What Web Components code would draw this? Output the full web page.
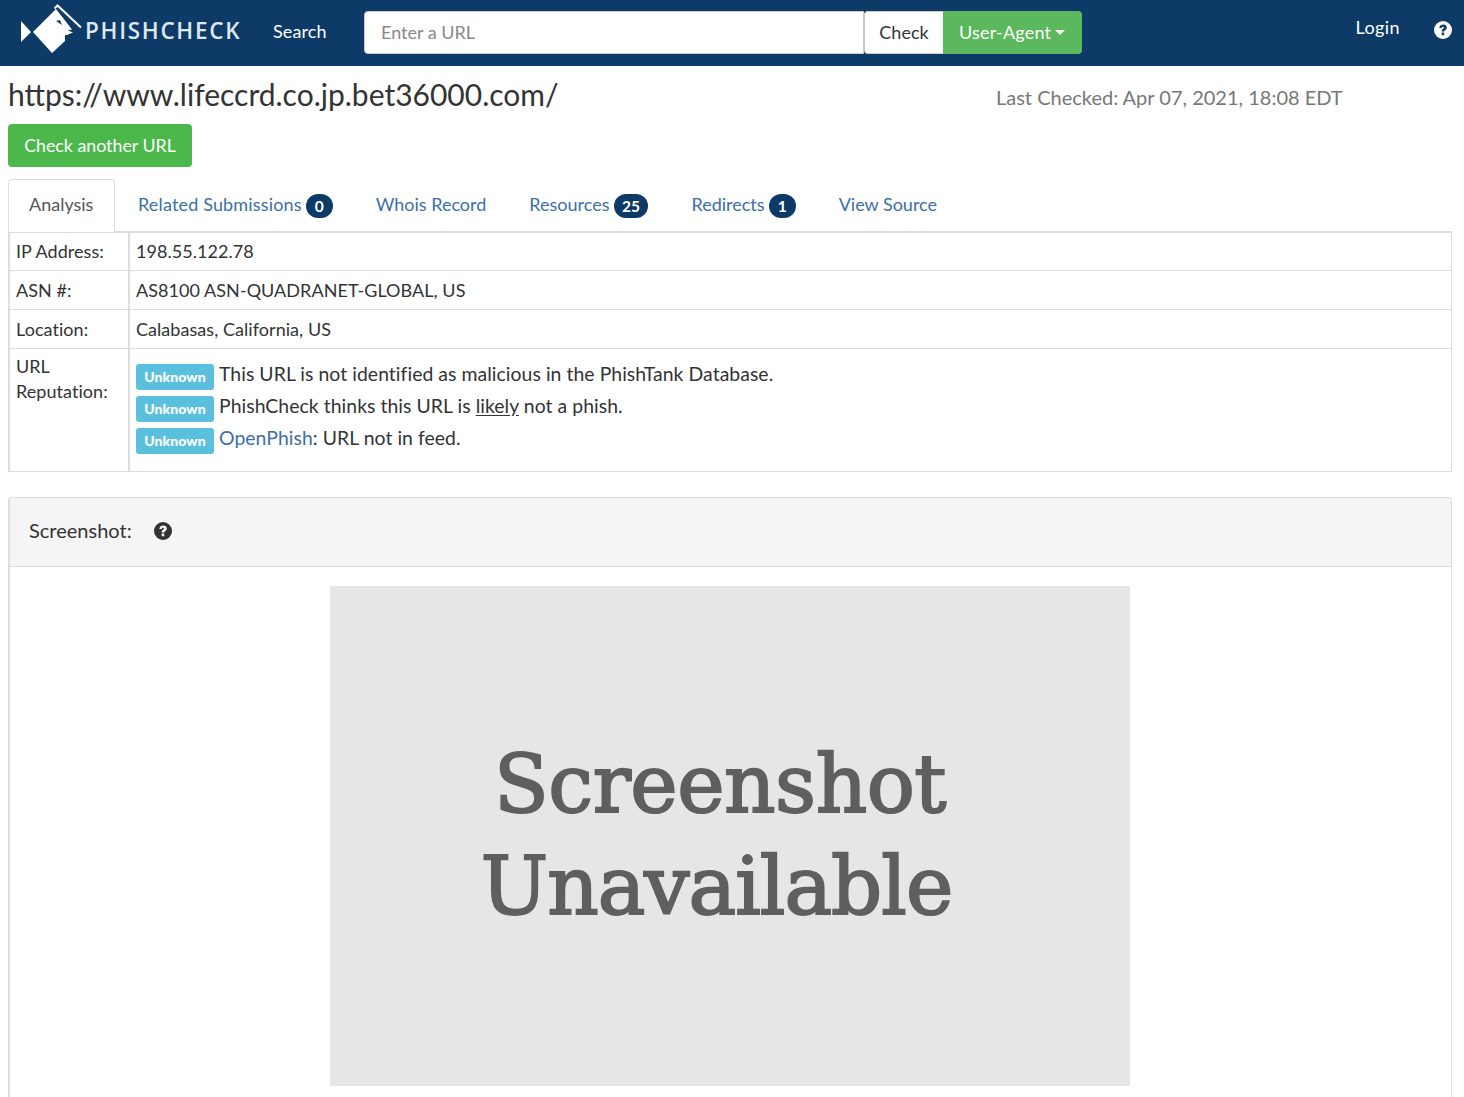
<!DOCTYPE html>
<html><head><meta charset="utf-8"><style>
html,body{margin:0;padding:0;background:#fff;color:#333;font:18px/25.7px "Lato",sans-serif}
</style></head><body>
<pc-nav></pc-nav>
<pc-main></pc-main>
<script>
const FONT='font-family:Lato,sans-serif;';
const help=(c,q)=>`<svg width="18" height="18" viewBox="0 0 18 18" style="display:block"><circle cx="9" cy="9" r="9" fill="${c}"/><path d="M5.300 6.900C5.600 4.700 7.200 3.500 9.200 3.500c2.100 0 3.600 1.300 3.600 3 0 1.400-.8 2.100-1.700 2.700-.7.400-.9.700-.9 1.300H7.700c0-1.400.3-2.100 1.300-2.800.6-.4 1-.6 1-1.100 0-.5-.4-.8-1-.8-.7 0-1.100.4-1.300 1.300z M7.700 11.500h2.500v2.700H7.700z" fill="${q}"/></svg>`;
class PcNav extends HTMLElement{constructor(){super();this.attachShadow({mode:'open'}).innerHTML=`<style>
:host{display:flex;align-items:flex-start;height:66px;background:#0d3a66;color:#fff;${FONT}font-size:18px;box-sizing:border-box}
.logo{display:block;margin:3px 0 0 20px;flex:none}
.brand{margin:18px 0 0 1px;font:600 22.500px/26px "Open Sans",sans-serif;letter-spacing:1.700px;color:#dfe7ef;width:156px;white-space:nowrap}
.s{margin:19px 0 0 32px;line-height:25px;width:91px;letter-spacing:.1px}
.g{display:flex;height:43px;margin-top:11px}
.i{width:500px;box-sizing:border-box;background:#fff;border:1px solid #ccc;border-radius:4px 0 0 4px;color:#888;padding:0 16px;line-height:41px}
.c{width:79px;box-sizing:border-box;background:#fff;color:#333;border-radius:4px 0 0 4px;border:1px solid #ccc;border-right:0;text-align:center;line-height:41px}
.u{width:139px;box-sizing:border-box;background:#5cb85c;border-radius:0 4px 4px 0;padding-left:16px;line-height:43px;display:flex;align-items:center;gap:4px;letter-spacing:.2px}
.car{width:0;height:0;border:5px solid transparent;border-top-color:#fff;border-bottom:0}
.l{margin:15px 0 0 auto;line-height:25px;letter-spacing:.4px}
.h{margin:21px 12px 0 34px}
</style>
<svg class="logo" width="64" height="52" viewBox="20 3 64 52"><path d="M21 21 31 32 21 42z" fill="#fff"/><path d="M33 32 56 9 72 29.500 68 30.500 73 32.500 67 35 65 35 65 41 52 53z" fill="#fff"/><path d="M54.500 8.500 57.500 5.500 81 27.500" stroke="#fff" stroke-width="2" fill="none"/><path d="M56 21 60 20 62 25z" fill="#0d3a66"/></svg>
<div class="brand">PHISHCHECK</div>
<div class="s">Search</div>
<div class="g"><div class="i">Enter a URL</div><div class="c">Check</div><div class="u">User-Agent<span class="car"></span></div></div>
<div class="l">Login</div>
<div class="h">${help('#fff','#0d3a66')}</div>`}}
customElements.define('pc-nav',PcNav);
class PcTabs extends HTMLElement{constructor(){super();this.attachShadow({mode:'open'}).innerHTML=`<style>
:host{display:flex;${FONT}font-size:18px;height:53px;box-sizing:border-box;border-bottom:1px solid #ddd}
a{display:block;color:#3d6fa5;padding:13px 21px;line-height:25px;height:52px;box-sizing:border-box;white-space:nowrap;margin-right:1px}
a.on{color:#555;border:1px solid #ddd;border-bottom:0;border-radius:4px 4px 0 0;background:#fff;height:53px;padding:12px 20px;width:107px;margin-right:2px}
b{display:inline-block;background:#0d3a66;color:#fff;border-radius:12px;font-size:15.500px;line-height:16px;padding:4px 9px;min-width:9px;text-align:center;vertical-align:-1px;margin-left:4px;letter-spacing:0}
b.w{padding:4px 8.500px}
.ls{letter-spacing:.16px}
</style><a class="on">Analysis</a><a class="ls">Related Submissions<b>0</b></a><a>Whois Record</a><a>Resources<b class="w">25</b></a><a>Redirects<b>1</b></a><a>View Source</a>`}}
customElements.define('pc-tabs',PcTabs);
class PcInfo extends HTMLElement{constructor(){super();this.attachShadow({mode:'open'}).innerHTML=`<style>
:host{display:block;${FONT}font-size:18px}
.t{display:grid;grid-template-columns:120px 1fr;border:1px solid #ddd;border-left-width:2px}
.k,.v{padding:6px;line-height:26px;box-sizing:border-box;letter-spacing:.05px}
.k{border-right:2px solid #ddd}
.r{border-top:1px solid #ddd}
.first{padding-top:5px}
.b{height:32px;display:flex;align-items:flex-start;white-space:pre;font-size:19.400px}
.v.rep{padding:12px 6px 14px}
.k.rk{padding-top:5px;line-height:25px}
.lb{display:block;margin-top:3px;background:#5bc0de;color:#fff;font-weight:900;font-size:14px;line-height:26px;height:26px;border-radius:3px;margin-right:5px;width:78px;text-align:center}
a{color:#3d6fa5}u{text-underline-offset:2px}
</style><div class="t">
<div class="k first">IP Address:</div><div class="v first">198.55.122.78</div>
<div class="k r">ASN #:</div><div class="v r">AS8100 ASN-QUADRANET-GLOBAL, US</div>
<div class="k r">Location:</div><div class="v r">Calabasas, California, US</div>
<div class="k r rk">URL<br>Reputation:</div><div class="v r rep">
<div class="b"><span class="lb">Unknown</span><span>This URL is not identified as malicious in the PhishTank Database.</span></div>
<div class="b"><span class="lb">Unknown</span><span>PhishCheck thinks this URL is <u>likely</u> not a phish.</span></div>
<div class="b"><span class="lb">Unknown</span><span><a>OpenPhish</a>: URL not in feed.</span></div>
</div></div>`}}
customElements.define('pc-info',PcInfo);
class PcPanel extends HTMLElement{constructor(){super();this.attachShadow({mode:'open'}).innerHTML=`<style>
:host{display:block;${FONT}margin-top:25px;border:1px solid #ddd;border-bottom:0;border-left-width:2px;border-radius:4px 4px 0 0;box-sizing:border-box;height:600px;overflow:hidden}
.h{height:69px;box-sizing:border-box;background:#f5f5f5;border-bottom:1px solid #ddd;display:flex;align-items:center;padding:0 19px 3px;font-size:20px;gap:22px}
.b{padding:19px 0 0 320px}
.img{width:800px;height:500px;background:#e6e6e6;color:#5f5f5f;display:flex;flex-direction:column;align-items:center;justify-content:center;font:400 80px/102px "DejaVu Serif",serif;-webkit-text-stroke:2px #5f5f5f;padding-right:20px;box-sizing:border-box}
.a{letter-spacing:-.5px}.z{letter-spacing:-1px;padding-right:7px}
</style><div class="h"><span>Screenshot:</span>${help('#333','#f5f5f5')}</div><div class="b"><div class="img"><div class="a">Screenshot</div><div class="z">Unavailable</div></div></div>`}}
customElements.define('pc-panel',PcPanel);
class PcMain extends HTMLElement{constructor(){super();this.attachShadow({mode:'open'}).innerHTML=`<style>
:host{display:block;padding:0 12px 0 8px;${FONT}height:1031px;overflow:hidden;box-sizing:border-box}
.top{display:flex;height:58px}
h1{font-weight:400;font-size:30px;line-height:36px;margin:10px 0 0 0;color:#333;width:988px;white-space:nowrap}
.when{font-size:20px;color:#777;margin-top:19px;white-space:nowrap}
.btn{display:block;width:184px;height:43px;background:#4cb84c;color:#fff;border-radius:4px;line-height:42px;text-align:center;font-size:17.800px}
pc-tabs{margin-top:12px}
</style><div class="top"><h1>https://www.lifeccrd.co.jp.bet36000.com/</h1><div class="when">Last Checked: Apr 07, 2021, 18:08 EDT</div></div>
<div class="btn">Check another URL</div><pc-tabs></pc-tabs><pc-info></pc-info><pc-panel></pc-panel>`}}
customElements.define('pc-main',PcMain);
</script></body></html>
